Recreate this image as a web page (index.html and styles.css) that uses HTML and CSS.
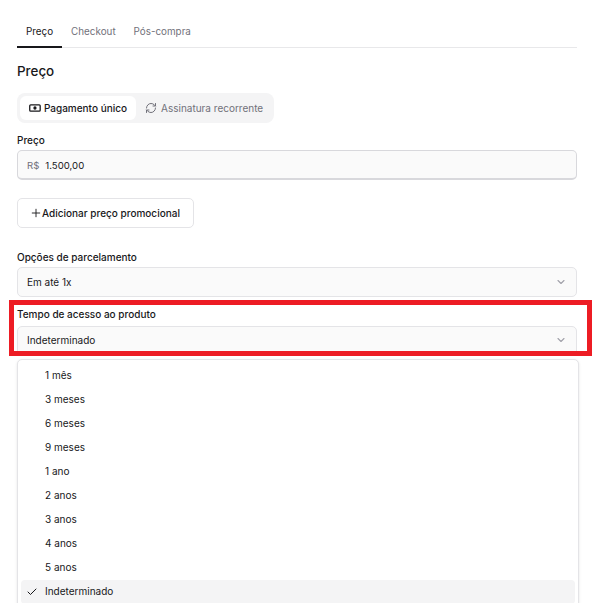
FILE: index.html
```html
<!DOCTYPE html>
<html lang="pt-BR">
<head>
  <meta charset="UTF-8">
  <title>Preço</title>
  <link rel="stylesheet" href="styles.css">
</head>
<body>
  <div class="page">
    <div class="tabs">
      <a class="tab active">Preço</a>
      <a class="tab">Checkout</a>
      <a class="tab">Pós-compra</a>
    </div>
    <h2 class="title">Preço</h2>
    <div class="segment">
      <div class="segItem on">
        <svg width="12" height="12" viewBox="0 0 24 24" fill="none" stroke="currentColor" stroke-width="2.6"><rect x="1.5" y="5.5" width="21" height="13" rx="2"/><circle cx="12" cy="12" r="2" fill="currentColor"/></svg>
        Pagamento único
      </div>
      <div class="segItem">
        <svg width="12" height="12" viewBox="0 0 24 24" fill="none" stroke="currentColor" stroke-width="2" stroke-linecap="round" stroke-linejoin="round"><path d="M3 12a9 9 0 0 1 9-9 9.75 9.75 0 0 1 6.74 2.74L21 8"/><path d="M21 3v5h-5"/><path d="M21 12a9 9 0 0 1-9 9 9.75 9.75 0 0 1-6.74-2.74L3 16"/><path d="M8 16H3v5"/></svg>
        Assinatura recorrente
      </div>
    </div>
    <label class="label lblPrice">Preço</label>
    <div class="input priceInput"><span class="prefix">R$</span><span>1.500,00</span></div>
    <button class="addBtn">
      <svg width="10" height="10" viewBox="0 0 24 24" fill="none" stroke="currentColor" stroke-width="2.2" stroke-linecap="round"><path d="M3 12h18"/><path d="M12 3v18"/></svg>
      Adicionar preço promocional
    </button>
    <label class="label lblParc">Opções de parcelamento</label>
    <div class="input select selParc">
      <span>Em até 1x</span>
      <svg class="chev" width="12" height="12" viewBox="0 0 24 24" fill="none" stroke="currentColor" stroke-width="2.2" stroke-linecap="round" stroke-linejoin="round"><path d="m6 9 6 6 6-6"/></svg>
    </div>
    <label class="label lblTempo">Tempo de acesso ao produto</label>
    <div class="input select selTempo">
      <span>Indeterminado</span>
      <svg class="chev" width="12" height="12" viewBox="0 0 24 24" fill="none" stroke="currentColor" stroke-width="2.2" stroke-linecap="round" stroke-linejoin="round"><path d="m6 9 6 6 6-6"/></svg>
    </div>
    <div class="menu">
      <div class="opt">1 mês</div>
      <div class="opt">3 meses</div>
      <div class="opt">6 meses</div>
      <div class="opt">9 meses</div>
      <div class="opt">1 ano</div>
      <div class="opt">2 anos</div>
      <div class="opt">3 anos</div>
      <div class="opt">4 anos</div>
      <div class="opt">5 anos</div>
      <div class="opt selected">
        <svg class="check" width="12" height="12" viewBox="0 0 24 24" fill="none" stroke="currentColor" stroke-width="2" stroke-linecap="round" stroke-linejoin="round"><path d="M20 6 9 17l-5-5"/></svg>
        Indeterminado
      </div>
    </div>
  </div>
  <div class="highlight"></div>
</body>
</html>
```

FILE: styles.css
```css
* {
  box-sizing: border-box;
}
html, body {
  height: 603px;
  overflow: hidden;
}
body {
  margin: 0;
  background: #fff;
  color: #18181b;
  font-family: Inter, "Liberation Sans", sans-serif;
  font-size: 10px;
  line-height: 16px;
  position: relative;
}
.page {
  width: 560px;
  margin-left: 17px;
  padding-top: 15px;
}
.tabs {
  display: flex;
  height: 33px;
  border-bottom: 1px solid #e8e8ea;
}
.tab {
  height: 33px;
  padding: 8px 9px 0;
  color: #71717a;
  font-size: 9.85px;
}
.tab.active {
  color: #18181b;
  border-bottom: 2px solid #18181b;
}
.title {
  margin: 13px 0 0;
  font-size: 13.4px;
  line-height: 20px;
  font-weight: 500;
}
.segment {
  display: flex;
  margin-top: 12px;
  padding: 3px;
  height: 30px;
  width: 257px;
  background: #f4f4f5;
  border-radius: 8px;
}
.segItem {
  display: flex;
  align-items: center;
  gap: 4px;
  padding: 0 9px;
  color: #71717a;
  border-radius: 6px;
  white-space: nowrap;
}
.segItem.on {
  gap: 3px;
  color: #18181b;
  background: #fff;
  font-weight: 450;
  width: 116px;
}
.label {
  display: block;
  font-weight: 450;
}
.lblPrice {
  margin-top: 9px;
}
.input {
  display: flex;
  align-items: center;
  height: 30px;
  margin-top: 2px;
  padding: 0 9px;
  background: #fafafa;
  border: 1px solid #e4e4e7;
  border-radius: 5px;
}
.priceInput {
  gap: 6px;
  padding-top: 2px;
  font-size: 9.6px;
  border-color: #d8d8dc;
  border-bottom-width: 2px;
}
.prefix {
  color: #71717a;
}
.addBtn {
  display: flex;
  align-items: center;
  justify-content: center;
  gap: 1px;
  width: 177px;
  height: 30px;
  margin-top: 18px;
  padding: 0;
  background: #fff;
  color: #18181b;
  border: 1px solid #e4e4e7;
  border-radius: 5px;
  font: inherit;
  font-weight: 450;
}
.lblParc {
  margin-top: 21px;
}
.selParc {
  margin-top: 2px;
}
.lblTempo {
  margin-top: 9px;
}
.selTempo {
  margin-top: 4px;
  padding-bottom: 2px;
}
.select {
  justify-content: space-between;
}
.chev {
  color: #a1a1aa;
}
.menu {
  width: 562px;
  margin-top: 3px;
  padding: 4px 3px;
  background: #fff;
  border: 1px solid #e4e4e7;
  border-radius: 5px;
  box-shadow: 0 1px 3px rgba(0, 0, 0, 0.1);
}
.opt {
  position: relative;
  height: 24px;
  padding: 3px 0 0 24px;
  border-radius: 4px;
}
.opt.selected {
  background: #f4f4f5;
}
.check {
  position: absolute;
  left: 5px;
  top: 6px;
}
.highlight {
  position: absolute;
  left: 9px;
  top: 300px;
  width: 583px;
  height: 56px;
  border: 5px solid #ed1c24;
}
```
